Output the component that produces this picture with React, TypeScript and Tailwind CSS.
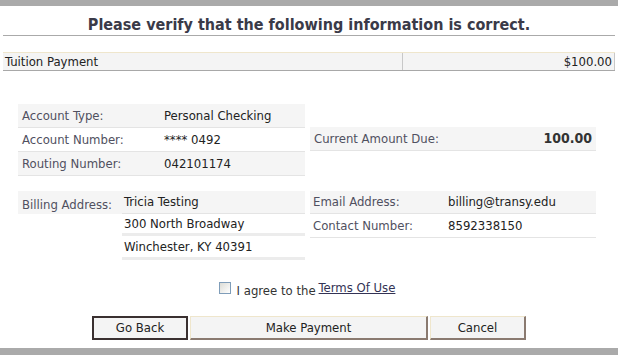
import React from "react";

const font = { fontFamily: '"DejaVu Sans Condensed", "DejaVu Sans", Tahoma, sans-serif' };

function Row({ label, value, labelW, bg, bold }: { label: string; value: string; labelW: string; bg: boolean; bold?: boolean }) {
  return (
    <div className={`flex h-[24px] items-center border-b border-[#e4e4e4] ${bg ? "bg-[#f5f5f5]" : "bg-white"}`}>
      <div className={`${labelW} pl-[4px] text-[#505060]`}>{label}</div>
      <div className={`flex-1 ${bold ? "text-right pr-[4px] font-bold text-[14px] text-[#333]" : "text-[#222]"}`}>{value}</div>
    </div>
  );
}

export default function App() {
  return (
    <div style={font} className="w-[618px] h-[355px] bg-white flex flex-col text-[13px] text-[#222] overflow-hidden">
      <div className="h-[6px] bg-[#aaaaaa]" />
      <div className="mx-[3px] mt-[6px] h-[24px] border-b border-[#aaaaaa] text-center text-[16px] font-bold text-[#3a3a48] leading-[26px]">
        Please verify that the following information is correct.
      </div>
      <div className="mx-[3px] mt-[16px] flex h-[19px] border-t border-[#efe6cc] border-b border-b-[#a8a8a8] bg-[#f4f4f4]">
        <div className="w-[400px] pl-[2px] leading-[17px] border-r border-[#c8c8c8]">Tuition Payment</div>
        <div className="flex-1 text-right pr-[2px] leading-[17px] border-r border-[#c8c8c8]">$100.00</div>
      </div>
      <div className="flex mt-[33px] ml-[18px] gap-[5px]">
        <div className="w-[287px] flex flex-col">
          <Row label="Account Type:" value="Personal Checking" labelW="w-[146px]" bg />
          <Row label="Account Number:" value="**** 0492" labelW="w-[146px]" bg={false} />
          <Row label="Routing Number:" value="042101174" labelW="w-[146px]" bg />
        </div>
        <div className="w-[286px] flex flex-col pt-[23px]">
          <Row label="Current Amount Due:" value="100.00" labelW="w-[150px]" bg bold />
        </div>
      </div>
      <div className="flex mt-[15px] ml-[18px] gap-[5px]">
        <div className="w-[287px] flex">
          <div className="w-[104px] h-[23px] bg-[#f5f5f5] pl-[4px] pt-[4px] text-[#505060]">Billing Address:</div>
          <div className="flex-1 flex flex-col">
            <div className="h-[23px] bg-[#f5f5f5] border-b border-[#e4e4e4] flex items-center pl-[2px]">Tricia Testing</div>
            <div className="h-[22px] border-b-[3px] border-[#ececec] flex items-center pl-[2px]">300 North Broadway</div>
            <div className="h-[24px] border-b-[3px] border-[#ececec] flex items-center pl-[2px]">Winchester, KY 40391</div>
          </div>
        </div>
        <div className="w-[286px] flex flex-col">
          <div className="flex h-[23px] items-center bg-[#f5f5f5] border-b border-[#e4e4e4]">
            <div className="w-[138px] pl-[3px] text-[#505060]">Email Address:</div>
            <div className="flex-1">billing@transy.edu</div>
          </div>
          <div className="flex h-[24px] items-center border-b border-[#e4e4e4]">
            <div className="w-[138px] pl-[3px] text-[#505060]">Contact Number:</div>
            <div className="flex-1">8592338150</div>
          </div>
        </div>
      </div>
      <div className="flex justify-center items-start mt-[18px] pr-[4px] h-[20px]">
        <div className="w-[12px] h-[12px] mt-[4px] border border-[#7f9db9] bg-gradient-to-br from-[#dcdcd6] to-[#fff]" />
        <span className="ml-[6px] mt-[3px] text-[#333]">I agree to the</span>
        <span className="ml-[3px] text-[#333355] underline">Terms Of Use</span>
      </div>
      <div className="flex ml-[92px] mt-[18px] gap-[2px] h-[24px]">
        <button className="w-[96px] h-[24px] bg-[#f4f4f4] border-[2px] border-[#3a3030] text-[#222]">Go Back</button>
        <button className="w-[238px] h-[24px] bg-[#f4f4f4] border border-[#efe6cc] border-r-[2px] border-b-[2px] border-r-[#8a7a70] border-b-[#8a7a70] text-[#222]">Make Payment</button>
        <button className="w-[96px] h-[24px] bg-[#f4f4f4] border border-[#efe6cc] border-r-[2px] border-b-[2px] border-r-[#8a7a70] border-b-[#8a7a70] text-[#222]">Cancel</button>
      </div>
      <div className="mt-auto h-[7px] bg-[#aaaaaa]" />
    </div>
  );
}
